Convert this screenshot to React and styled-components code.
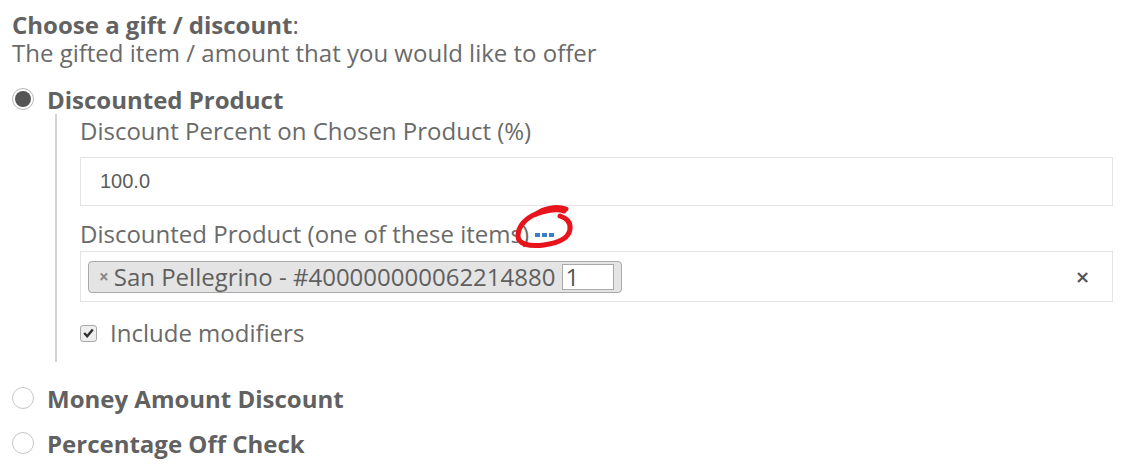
import styled, { createGlobalStyle } from "styled-components";

const GlobalStyle = createGlobalStyle`
  html, body {
    margin: 0;
    padding: 0;
    background: #ffffff;
  }
  body {
    font-family: "Open Sans", "Noto Sans", sans-serif;
    color: #666666;
  }
`

const Page = styled.div`
  width: 1136px;
  height: 474px;
  padding: 11px 0 0 12px;
  box-sizing: border-box;
  position: relative;
  overflow: hidden;
`

const Heading = styled.div`
  font-size: 24px;
  line-height: 28px;
  color: #626262;
`

const Strong = styled.span`
  font-weight: 700;
`

const Hint = styled.div`
  font-size: 24px;
  line-height: 28px;
  color: #6a6a6a;
`

const OptionRow = styled.label`
  display: flex;
  align-items: center;
  gap: 13px;
  height: 30px;
  margin-top: ${p => p.$top || 0}px;
  font-size: 24px;
  font-weight: 700;
  color: #616161;
`

const Radio = styled.span`
  width: 22px;
  height: 22px;
  flex: none;
  box-sizing: border-box;
  border-radius: 50%;
  border: 1px solid ${p => (p.$checked ? "#b8b8b8" : "#c6c6c6")};
  background: #ffffff;
  display: flex;
  align-items: center;
  justify-content: center;

  &::after {
    content: "";
    display: ${p => (p.$checked ? "block" : "none")};
    width: 16px;
    height: 16px;
    border-radius: 50%;
    background: #555555;
  }
`

const Nested = styled.div`
  margin-left: 43px;
  border-left: 2px solid #d3d3d3;
  padding: 3px 23px 15px 23px;
  width: 1033px;
  box-sizing: content-box;
`

const FieldLabel = styled.div`
  font-size: 24px;
  line-height: 28px;
  color: #6a6a6a;
  display: flex;
  align-items: center;
  margin-top: ${p => p.$top || 0}px;
`

const TextBox = styled.div`
  height: 49px;
  box-sizing: border-box;
  border: 1px solid #e3e3e3;
  margin-top: 12px;
  display: flex;
  align-items: center;
  padding: 0 19px;
  font-family: "Liberation Sans", Arial, sans-serif;
  font-size: 20px;
  color: #5c5c5c;
`

const SelectBox = styled.div`
  height: 51px;
  box-sizing: border-box;
  border: 1px solid #e3e3e3;
  margin-top: 3px;
  display: flex;
  align-items: center;
  justify-content: space-between;
  padding: 0 22px 0 7px;
`

const Tag = styled.div`
  display: flex;
  align-items: center;
  height: 32px;
  box-sizing: border-box;
  border: 1px solid #a9a9a9;
  border-radius: 4px;
  background: #e4e4e4;
  padding: 0 7px 0 10px;
  font-size: 24px;
  color: #5f5f5f;
`

const TagRemove = styled.span`
  font-size: 17px;
  color: #888888;
  margin-right: 5px;
  font-weight: 700;
`

const QtyInput = styled.span`
  width: 52px;
  height: 26px;
  box-sizing: border-box;
  margin-left: 7px;
  border: 1px solid #a9a9a9;
  background: #ffffff;
  font-size: 24px;
  line-height: 24px;
  padding-left: 2px;
  color: #555555;
`

const Clear = styled.span`
  font-family: "DejaVu Sans", sans-serif;
  font-size: 18px;
  font-weight: 700;
  color: #555555;
`

const CheckRow = styled.label`
  display: flex;
  align-items: center;
  gap: 13px;
  margin-top: 17px;
  font-size: 24px;
  line-height: 28px;
  color: #6a6a6a;
`

const Check = styled.span`
  width: 17px;
  height: 17px;
  flex: none;
  box-sizing: border-box;
  border: 1px solid #a8a8a8;
  border-radius: 3px;
  background: #eeeeee;
  display: flex;
  align-items: center;
  justify-content: center;
`

const Ellipsis = styled.span`
  display: inline-flex;
  gap: 2px;
  margin-left: 6px;
  position: relative;
  top: 1px;
`

const Dot = styled.span`
  width: 5px;
  height: 4px;
  background: #3d7fc6;
`

const Scribble = styled.svg`
  position: absolute;
  left: 506px;
  top: 202px;
  pointer-events: none;
`

export default function App() {
  return (
    <Page>
      <GlobalStyle />
      <Heading>
        <Strong>Choose a gift / discount</Strong>:
      </Heading>
      <Hint>The gifted item / amount that you would like to offer</Hint>

      <OptionRow $top={17}>
        <Radio $checked />
        Discounted Product
      </OptionRow>

      <Nested>
        <FieldLabel>Discount Percent on Chosen Product (%)</FieldLabel>
        <TextBox>100.0</TextBox>

        <FieldLabel $top={14}>
          Discounted Product (one of these items)
          <Ellipsis>
            <Dot />
            <Dot />
            <Dot />
          </Ellipsis>
        </FieldLabel>
        <SelectBox>
          <Tag>
            <TagRemove>×</TagRemove>
            San Pellegrino - #400000000062214880
            <QtyInput>1</QtyInput>
          </Tag>
          <Clear>×</Clear>
        </SelectBox>

        <CheckRow>
          <Check>
            <svg width="11" height="10" viewBox="0 0 11 10">
              <path d="M1.2 5 L4.2 8.2 L9.8 1.4" fill="none" stroke="#2f2f2f" strokeWidth="2.4" />
            </svg>
          </Check>
          Include modifiers
        </CheckRow>
      </Nested>

      <OptionRow $top={21}>
        <Radio />
        Money Amount Discount
      </OptionRow>
      <OptionRow $top={15}>
        <Radio />
        Percentage Off Check
      </OptionRow>

      <Scribble width="74" height="50" viewBox="0 0 74 50">
        <path
          d="M58 9 C50 6 39 9 30 12 C20 16 12 24 12 34 C12 42 23 45 38 43 C52 41 63 36 64 27 C65 20 60 16 54 14"
          fill="none"
          stroke="#e8141c"
          strokeWidth="5"
          strokeLinecap="round"
        />
        <path
          d="M30 12 C38 6 51 4 60 7"
          fill="none"
          stroke="#e8141c"
          strokeWidth="5"
          strokeLinecap="round"
        />
      </Scribble>
    </Page>
  );
}
